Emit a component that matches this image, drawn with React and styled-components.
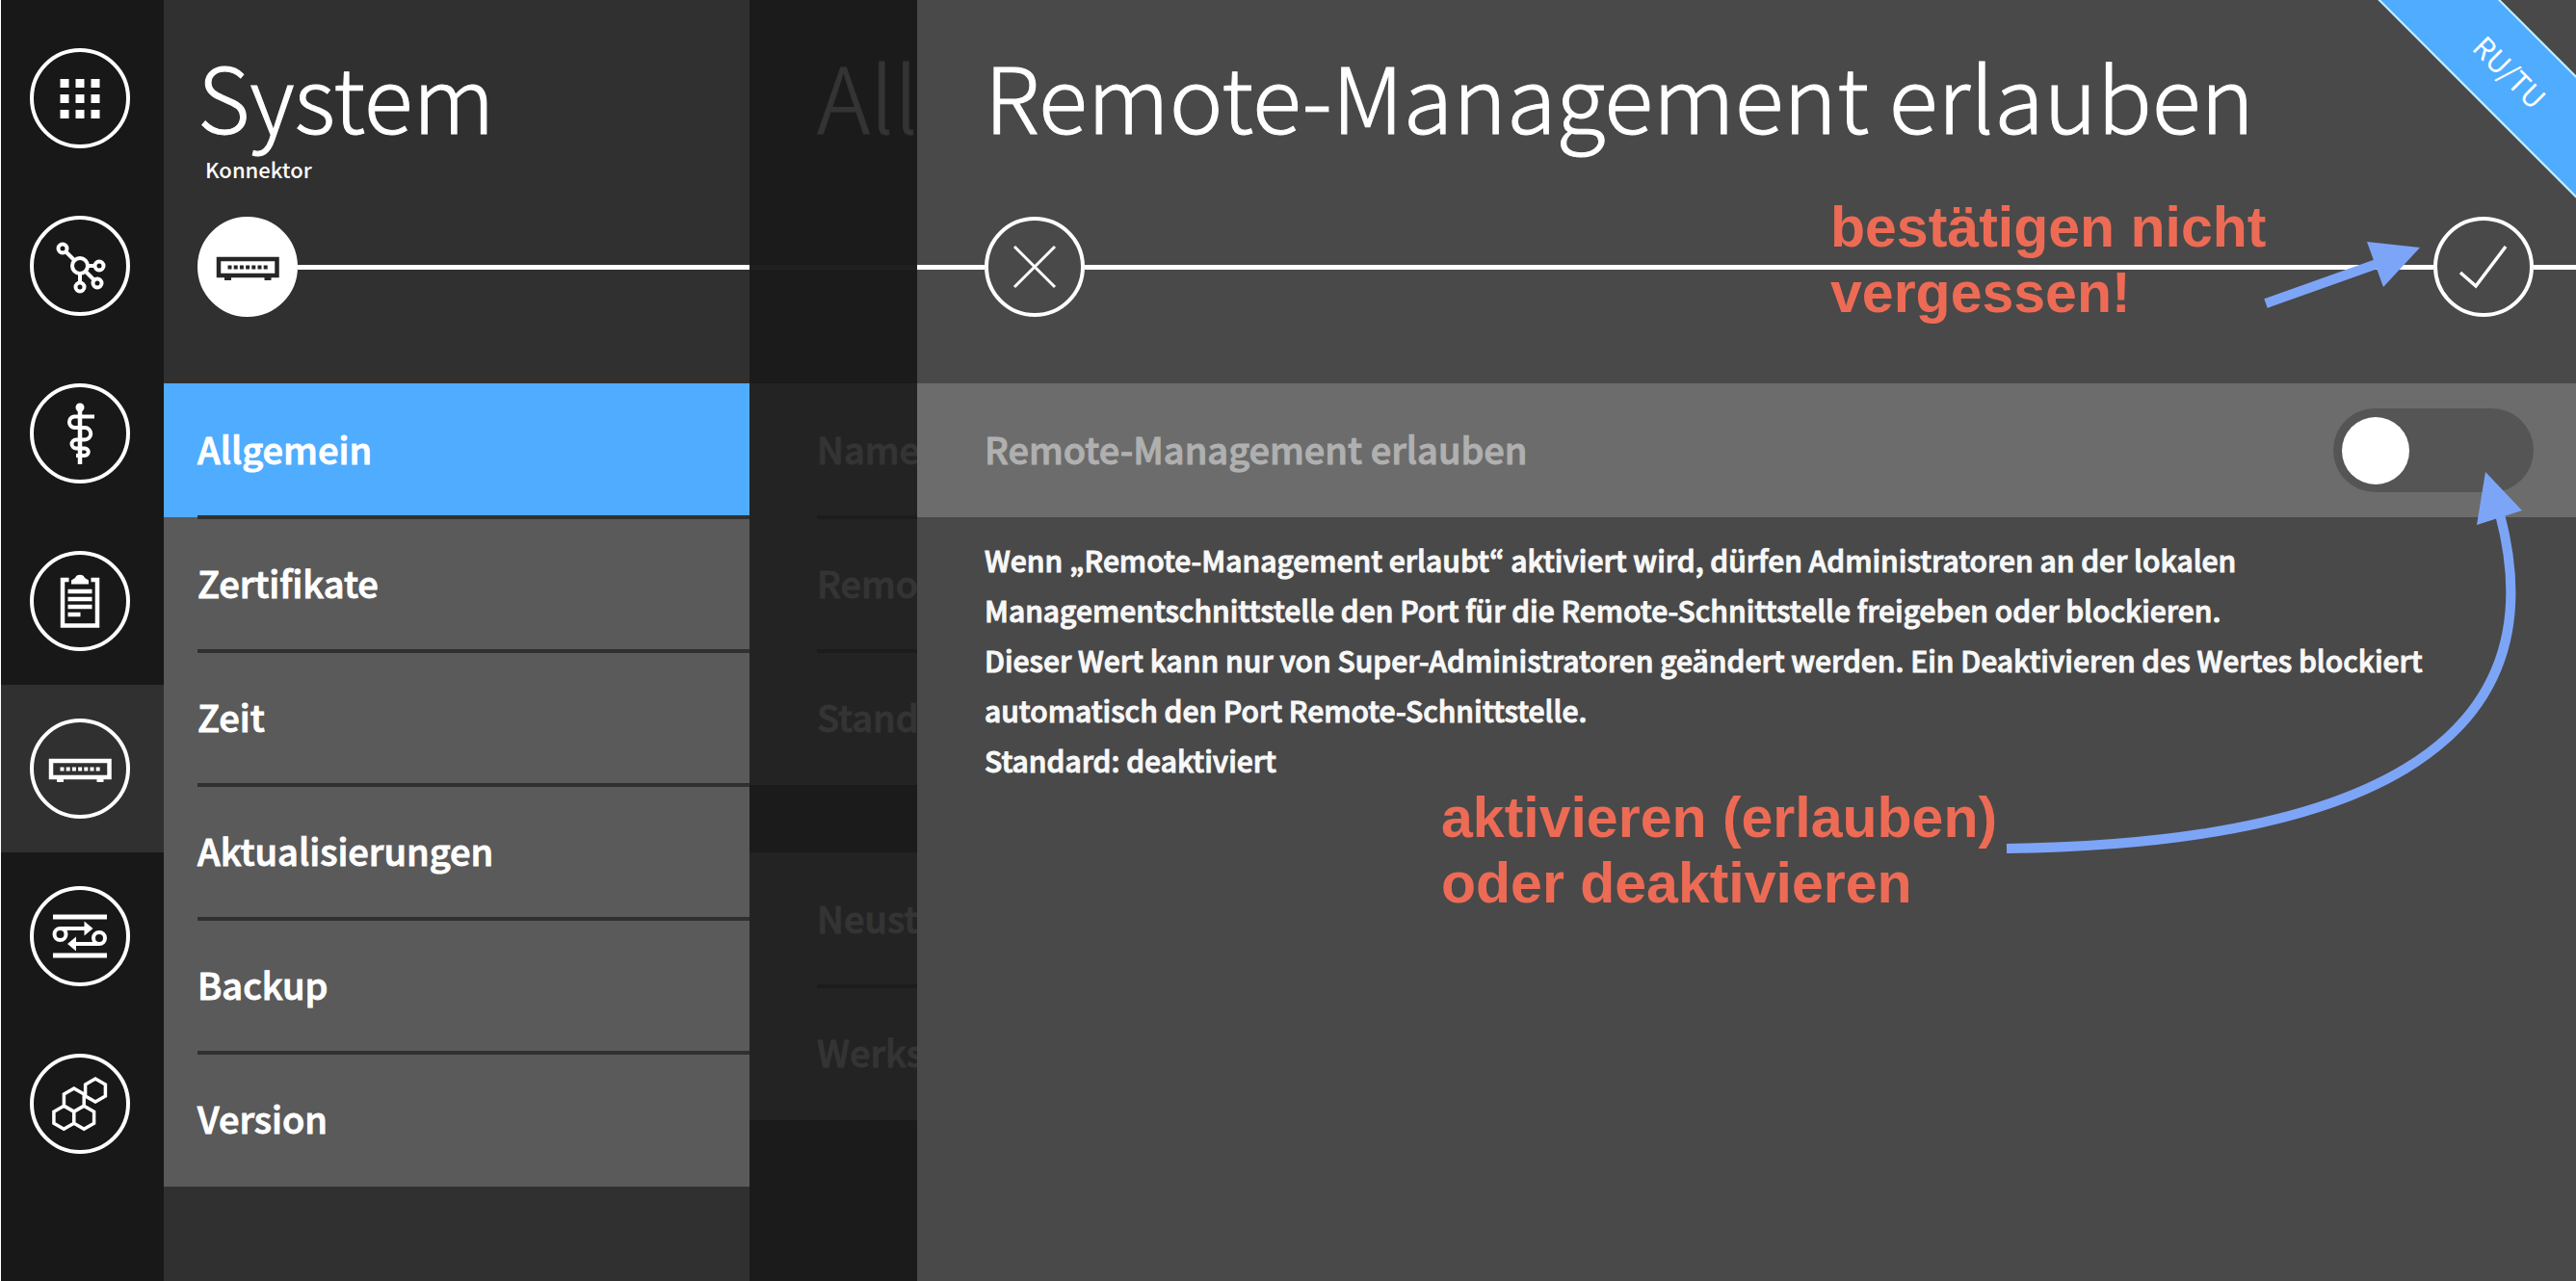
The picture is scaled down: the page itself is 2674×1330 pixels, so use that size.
import React, { useState } from "react";
import styled, { createGlobalStyle, css } from "styled-components";

const GlobalStyle = createGlobalStyle`
  *, *::before, *::after { box-sizing: border-box; }
  body {
    margin: 0;
    background: #494949;
    color: #fff;
    font-family: "Noto Sans CJK KR", "Noto Sans", sans-serif;
  }
  h1, h2, p, ul { margin: 0; padding: 0; }
  ul { list-style: none; }
  a { color: inherit; text-decoration: none; }
  button { font: inherit; color: inherit; }
`;

const heavier = css`
  -webkit-text-stroke: 1px currentColor;
`;

const Page = styled.div`
  display: grid;
  grid-template-columns: 169px 608px 174px minmax(0, 1fr);
  min-height: 100vh;
  border-left: 1px solid #fff;
  overflow: hidden;
`;

const Rail = styled.nav`
  background: #181818;
  padding-top: 15px;
`;

const RailLink = styled.a`
  display: flex;
  align-items: center;
  height: 174px;
  padding-left: 30px;
  background: ${(p) => (p.$active ? "#303030" : "transparent")};
`;

const IconSvg = styled.svg`
  display: block;
  flex: none;
  width: 104px;
  height: 104px;
`;

const Panel = styled.section`
  background: #303030;
  min-width: 0;
`;

const BackPanel = styled.section`
  background: #1b1b1b;
  color: #343434;
  min-width: 0;
  overflow: hidden;
`;

const Dialog = styled.main`
  position: relative;
  background: #494949;
  min-width: 0;
  overflow: hidden;
`;

const TitleArea = styled.header`
  height: 225px;
  padding: 43px 0 0 ${(p) => p.$inset}px;
  white-space: nowrap;
`;

const Title = styled.h1`
  font-size: 94px;
  line-height: 110px;
  font-weight: 300;
  ${heavier}
`;

const Subtitle = styled.p`
  padding: 8px 0 0 8px;
  font-size: 22px;
  line-height: 28px;
  font-weight: 500;
`;

const Timeline = styled.div`
  display: flex;
  align-items: center;
  height: 104px;
  margin-bottom: 69px;
`;

const Line = styled.span`
  height: 5px;
  background: ${(p) => (p.$faint ? "#202020" : "#fff")};
  ${(p) => (p.$width ? css`flex: none; width: ${p.$width}px;` : css`flex: 1;`)}
`;

const Gap = styled.span`
  flex: none;
  width: 35px;
`;

const RoundButton = styled.button`
  flex: none;
  padding: 0;
  border: 0;
  background: none;
  cursor: pointer;
`;

const Menu = styled.ul`
  & + & { margin-top: 70px; }
`;

const MenuItem = styled.li`
  height: 139px;
  padding-left: ${(p) => (p.$faint ? 70 : 35)}px;
  background: ${(p) => (p.$faint ? "#232323" : p.$active ? "#4facff" : "#5a5a5a")};
`;

const MenuLink = styled.a`
  display: flex;
  align-items: center;
  height: 100%;
  padding-bottom: 4px;
  border: solid ${(p) => (p.$faint ? "#1c1c1c" : "#303030")};
  border-width: 2px 0;
  font-size: 38px;
  font-weight: 500;
  white-space: nowrap;
  ${heavier}
  ${MenuItem}:first-child > & { border-top-color: transparent; }
  ${MenuItem}:last-child > & { border-bottom-color: transparent; }
`;

const SettingRow = styled.div`
  display: flex;
  align-items: center;
  justify-content: space-between;
  height: 139px;
  padding: 0 44px 0 70px;
  background: #6c6c6c;
`;

const SettingLabel = styled.label`
  padding-bottom: 4px;
  color: #b0b0b0;
  font-size: 38px;
  font-weight: 500;
  ${heavier}
`;

const Switch = styled.input`
  appearance: none;
  display: flex;
  align-items: center;
  justify-content: ${(p) => (p.checked ? "flex-end" : "flex-start")};
  width: 208px;
  height: 87px;
  margin: 0;
  padding: 0 9px;
  border-radius: 44px;
  background: #555;
  cursor: pointer;
  &::before {
    content: "";
    width: 70px;
    height: 70px;
    border-radius: 50%;
    background: #fff;
  }
`;

const Help = styled.div`
  padding: 18px 44px 0 70px;
  font-size: 30px;
  line-height: 52px;
  font-weight: 500;
  color: #f8f8f8;
  ${heavier}
`;

const Ribbon = styled.div`
  position: absolute;
  top: 29px;
  right: -132px;
  width: 400px;
  height: 90px;
  border: solid #c4efff;
  border-width: 2px 0;
  background: #4facff;
  transform: rotate(45deg);
  text-align: center;
  font-size: 30px;
  line-height: 86px;
`;

const Arrows = styled.svg`
  position: absolute;
  top: 0;
  right: 0;
  width: 674px;
  height: 920px;
  pointer-events: none;
`;

const Note = styled.p`
  position: absolute;
  top: ${(p) => p.$top}px;
  right: ${(p) => p.$right}px;
  width: ${(p) => p.$width}px;
  color: #ed6b55;
  font: bold 59px/68px "Liberation Sans", Arial, sans-serif;
  white-space: nowrap;
  pointer-events: none;
`;

const hexagon = (x, y) =>
  `M${x} ${y - 12}l10.4 6v12l-10.4 6l-10.4 -6v-12z`;

const Connector = () => (
  <>
    <path d="M22 44H82.5V61H22Z" strokeWidth="4.5" />
    <path d="M28 64.5h7M69.5 64.5h7" strokeWidth="3" />
    <path d="M31.5 52.5H73" strokeWidth="4" strokeDasharray="4 2.2" />
  </>
);

const drawings = {
  grid: (
    <path d="M31.5 36.5h41M31.5 52.5h41M31.5 68.5h41" strokeWidth="9" strokeDasharray="9 7" />
  ),
  network: (
    <>
      <circle cx="52" cy="52" r="8" />
      <circle cx="34" cy="34" r="4.5" />
      <circle cx="72" cy="52" r="4.5" />
      <circle cx="70" cy="70" r="4.5" />
      <circle cx="52" cy="74" r="4.5" />
      <path d="M37.5 37.5L46 46M60 52H67.5M58 58L66.5 66.5M52 60V69.5" />
    </>
  ),
  medical: (
    <>
      <circle cx="52" cy="25" r="4.5" fill="currentColor" stroke="none" />
      <path d="M52 25V84" strokeWidth="4.5" />
      <path d="M67 34.5H46a5.8 5.8 0 0 0 0 11.5H57a6 6 0 0 1 0 12.5H48a4.5 4.5 0 0 0 0 9H57a3.6 3.6 0 0 1 0 7.5H48" />
    </>
  ),
  clipboard: (
    <>
      <path d="M40.5 30H34V77.500H70V30H63.500" strokeWidth="4.5" />
      <path d="M43 34.500V30.500L47 28C48 23.500 56 23.500 57 28L61 30.500V34.500Z" fill="currentColor" stroke="none" />
      <path d="M39.500 42H64.500M39.500 50H64.500M39.500 58H64.500M39.500 66H52.500" strokeWidth="4.500" />
    </>
  ),
  connector: <Connector />,
  transfer: (
    <>
      <path d="M24 32H80M24 72H80" strokeWidth="5" />
      <circle cx="31.5" cy="50" r="6" />
      <circle cx="72" cy="54" r="6" />
      <path d="M31.5 44H58M72 60H47" />
      <path d="M56.500 36.500L65.500 44L56.500 51.500ZM48 52.500L39 60L48 67.500Z" fill="currentColor" stroke="none" />
    </>
  ),
  modules: (
    <path
      d={[hexagon(68, 38), hexagon(45.8, 48), hexagon(35.3, 66.3), hexagon(56.2, 66.3)].join("")}
      strokeWidth="3.5"
    />
  ),
  close: <path d="M31 31L73 73M73 31L31 73" strokeWidth="3" />,
  confirm: <path d="M28 58L44 72L75 31" strokeWidth="3.5" />,
};

function RoundIcon({ name, solid }) {
  return (
    <IconSvg viewBox="0 0 104 104" fill="none" stroke="currentColor" strokeWidth="4" aria-hidden="true">
      <circle cx="52" cy="52" r="50" stroke="#fff" fill={solid ? "#fff" : "none"} />
      <g color={solid ? "#262626" : "#fff"} stroke="currentColor">
        {drawings[name]}
      </g>
    </IconSvg>
  );
}

const railItems = [
  ["grid", "Übersicht"],
  ["network", "Netzwerk"],
  ["medical", "Praxis"],
  ["clipboard", "Protokolle"],
  ["connector", "System"],
  ["transfer", "Datenaustausch"],
  ["modules", "Module"],
];

const menuItems = ["Allgemein", "Zertifikate", "Zeit", "Aktualisierungen", "Backup", "Version"];
const backMenus = [["Name", "Remo", "Stand"], ["Neust", "Werks"]];

export default function App() {
  const [allowed, setAllowed] = useState(false);
  return (
    <>
      <GlobalStyle />
      <Page>
        <Rail>
          {railItems.map(([icon, label]) => (
            <RailLink key={icon} href={`#${icon}`} aria-label={label} $active={icon === "connector"}>
              <RoundIcon name={icon} />
            </RailLink>
          ))}
        </Rail>

        <Panel>
          <TitleArea $inset={35}>
            <Title>System</Title>
            <Subtitle>Konnektor</Subtitle>
          </TitleArea>
          <Timeline>
            <Gap />
            <RoundIcon name="connector" solid />
            <Line />
          </Timeline>
          <Menu>
            {menuItems.map((item, i) => (
              <MenuItem key={item} $active={i === 0}>
                <MenuLink href={`#${item}`}>{item}</MenuLink>
              </MenuItem>
            ))}
          </Menu>
        </Panel>

        <BackPanel>
          <TitleArea $inset={70}>
            <Title as="h2">All</Title>
          </TitleArea>
          <Timeline>
            <Line $faint />
          </Timeline>
          {backMenus.map((items) => (
            <Menu key={items[0]}>
              {items.map((item) => (
                <MenuItem key={item} $faint>
                  <MenuLink href={`#${item}`} $faint>{item}</MenuLink>
                </MenuItem>
              ))}
            </Menu>
          ))}
        </BackPanel>

        <Dialog>
          <TitleArea $inset={70}>
            <Title>Remote-Management erlauben</Title>
          </TitleArea>
          <Timeline>
            <Line $width={70} />
            <RoundButton type="button" aria-label="Abbrechen">
              <RoundIcon name="close" />
            </RoundButton>
            <Line />
            <RoundButton type="button" aria-label="Bestätigen">
              <RoundIcon name="confirm" />
            </RoundButton>
            <Line $width={44} />
          </Timeline>
          <SettingRow>
            <SettingLabel htmlFor="remote">Remote-Management erlauben</SettingLabel>
            <Switch
              id="remote"
              type="checkbox"
              role="switch"
              checked={allowed}
              onChange={(e) => setAllowed(e.target.checked)}
            />
          </SettingRow>
          <Help>
            <p>
              Wenn „Remote-Management erlaubt“ aktiviert wird, dürfen Administratoren an der lokalen
              Managementschnittstelle den Port für die Remote-Schnittstelle freigeben oder blockieren.
            </p>
            <p>
              Dieser Wert kann nur von Super-Administratoren geändert werden. Ein Deaktivieren des Wertes
              blockiert automatisch den Port Remote-Schnittstelle.
            </p>
            <p>Standard: deaktiviert</p>
          </Help>

          <Ribbon>RU/TU</Ribbon>
          <Note $top={202} $right={314} $width={460}>
            bestätigen nicht
            <br />
            vergessen!
          </Note>
          <Note $top={815} $right={598} $width={580}>
            aktivieren (erlauben)
            <br />
            oder deaktivieren
          </Note>
          <Arrows viewBox="2000 0 674 920" fill="none" stroke="#7da5f7" strokeWidth="10" aria-hidden="true">
            <path d="M2352 315L2470 273" />
            <path d="M2512 257L2457 251L2474 298Z" fill="#7da5f7" stroke="none" />
            <path d="M2083 881C2440 876 2660 780 2595 534" />
            <path d="M2580 490L2618 530L2571 545Z" fill="#7da5f7" stroke="none" />
          </Arrows>
        </Dialog>
      </Page>
    </>
  );
}
